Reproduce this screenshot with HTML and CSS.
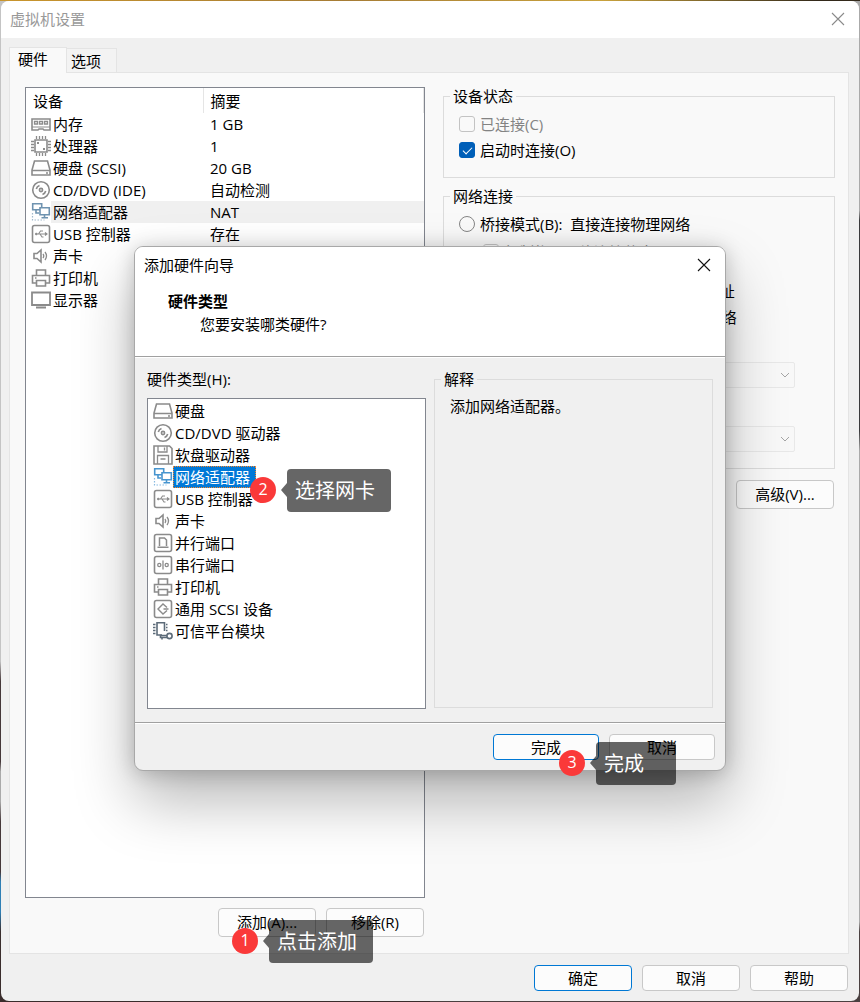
FILE: index.html
```html
<!DOCTYPE html>
<html lang="zh-CN">
<head>
<meta charset="utf-8">
<meta name="viewport" content="width=device-width, initial-scale=1">
<title>虚拟机设置</title>
<link rel="stylesheet" href="styles.css">
</head>
<body>
<svg class="sprite" aria-hidden="true">
  <symbol id="i-memory" viewBox="0 0 20 20"><path d="M1 5h18v11h-6l-1-1H8l-1 1H1z"/><path d="M1 13h18" stroke-width="1"/><path d="M3.500 7.500h3v2.500h-3zM8.500 7.500h3v2.500h-3zM13.500 7.500h3v2.500h-3z" stroke-width="1.300"/></symbol>
  <symbol id="i-cpu" viewBox="0 0 20 20"><path d="M4 4h12v12H4z"/><path d="M5.500 0v3M8.500 0v3M11.500 0v3M14.500 0v3M5.500 17v3M8.500 17v3M11.500 17v3M14.500 17v3M0 5.500h3M0 8.500h3M0 11.500h3M0 14.500h3M17 5.500h3M17 8.500h3M17 11.500h3M17 14.500h3" stroke-width="1.300"/><path d="M6 7h2M12 13h2" stroke-width="2"/></symbol>
  <symbol id="i-disk" viewBox="0 0 20 20"><path d="M3.500 3h13L19 12v5H1v-5z"/><path d="M1 12.500h18M15 15h2"/></symbol>
  <symbol id="i-cd" viewBox="0 0 20 20"><circle cx="10" cy="10" r="8.300"/><circle cx="10" cy="10" r="1.600"/><path d="M5.300 9A5 5 0 0 1 8.500 5.500M14.700 11A5 5 0 0 1 11.500 14.500"/></symbol>
  <symbol id="i-net" viewBox="0 0 20 20"><path d="M1.700 1.700h9v6h-9z" fill="#fff"/><path d="M5 8v3h3" /><path d="M9 5.700h9.300v7H9z" fill="#fff"/><path d="M13.500 13v2.500M10.500 15.700h6.500"/><path d="M1.500 11v7h12" stroke-width="1.200" stroke-dasharray="1.500 1.500" opacity=".65"/></symbol>
  <symbol id="i-usb" viewBox="0 0 20 20"><rect x="1.500" y="1.500" width="17" height="17" rx="2"/><path d="M5 10h10M7.500 10l2-3H12M9 10l2 3h1.500M14 8.500l2 1.500-2 1.500" stroke-width="1.100"/><circle cx="5.200" cy="10" r=".9" fill="currentColor" stroke-width=".8"/></symbol>
  <symbol id="i-sound" viewBox="0 0 20 20"><path d="M3 7.500h3L10 4v12l-4-3.500H3z"/><path d="M12 8q1.500 2 0 4M14 6q3 4 0 8" stroke-width="1.300"/></symbol>
  <symbol id="i-print" viewBox="0 0 20 20"><path d="M5.500 7.500V2h9v5.500M5.500 15h-4V7.500h17V15h-4M5.500 12.500h9V18h-9zM4 10h1.500"/></symbol>
  <symbol id="i-monitor" viewBox="0 0 20 20"><path d="M1 2.500h18v12.500H1zM5 17.500h10" stroke-width="1.800"/></symbol>
  <symbol id="i-floppy" viewBox="0 0 20 20"><path d="M1 1h15.500L19 3.500V19H1z"/><path d="M5 1v6h9V1M11.500 2.500v3M4.500 19v-8.500h11V19M7.500 14h5" stroke-width="1.300"/></symbol>
  <symbol id="i-parallel" viewBox="0 0 20 20"><rect x="1.500" y="1.500" width="17" height="17" rx="2"/><path d="M6.500 13V5h5l2 2v6M4.500 14.200h11" stroke-width="1.500"/></symbol>
  <symbol id="i-serial" viewBox="0 0 20 20"><rect x="1.500" y="1.500" width="17" height="17" rx="2"/><path d="M10 5.500v9" stroke-width="1.300"/><circle cx="6.300" cy="10" r="1.600" stroke-width="1.300"/><circle cx="13.700" cy="10" r="1.600" stroke-width="1.300"/></symbol>
  <symbol id="i-scsi" viewBox="0 0 20 20"><rect x="1.500" y="1.500" width="17" height="17" rx="2"/><path d="M14 8.500L10 5 5 10l5 5 4-3.500M10.500 10h5" stroke-width="1.400"/></symbol>
  <symbol id="i-tpm" viewBox="0 0 20 20"><path d="M9 14H4V1.700h7.500V10M0 3.500h2.500M0 6.500h2.500M0 9.500h2.500M0 12.500h2.500M13 3.500h1.500M13 6.500h1.500M13 9.500h1.500"/><circle cx="16.500" cy="15" r="2.600"/><path d="M14 14.500H7.500v2H14M9 17v1.500"/></symbol>
  <symbol id="i-close" viewBox="0 0 14 14"><path d="M1 1l12 12M13 1L1 13"/></symbol>
</svg>

<main class="desktop">
  <section class="window" aria-label="虚拟机设置">
    <header class="titlebar">
      <h1>虚拟机设置</h1>
      <button class="close" aria-label="关闭"><svg><use href="#i-close"/></svg></button>
    </header>

    <div class="tabs" role="tablist">
      <button class="tab active" role="tab" aria-selected="true">硬件</button>
      <button class="tab" role="tab" aria-selected="false">选项</button>
    </div>

    <div class="panel" role="tabpanel">
      <div class="devices">
        <div class="device-box">
          <table class="device-table">
            <colgroup><col class="c-icon"><col class="c-name"><col></colgroup>
            <thead><tr><th colspan="2">设备</th><th>摘要</th></tr></thead>
            <tbody>
              <tr><td><svg class="icon"><use href="#i-memory"/></svg></td><td>内存</td><td>1 GB</td></tr>
              <tr><td><svg class="icon"><use href="#i-cpu"/></svg></td><td>处理器</td><td>1</td></tr>
              <tr><td><svg class="icon"><use href="#i-disk"/></svg></td><td>硬盘 (SCSI)</td><td>20 GB</td></tr>
              <tr><td><svg class="icon"><use href="#i-cd"/></svg></td><td>CD/DVD (IDE)</td><td>自动检测</td></tr>
              <tr class="current"><td><svg class="icon blue"><use href="#i-net"/></svg></td><td>网络适配器</td><td>NAT</td></tr>
              <tr><td><svg class="icon"><use href="#i-usb"/></svg></td><td>USB 控制器</td><td>存在</td></tr>
              <tr><td><svg class="icon"><use href="#i-sound"/></svg></td><td>声卡</td><td></td></tr>
              <tr><td><svg class="icon"><use href="#i-print"/></svg></td><td>打印机</td><td></td></tr>
              <tr><td><svg class="icon"><use href="#i-monitor"/></svg></td><td>显示器</td><td></td></tr>
            </tbody>
          </table>
        </div>
        <div class="device-actions">
          <div class="anchor">
            <button class="btn">添加(A)...</button>
            <div class="note note-add"><b>1</b><span>点击添加</span></div>
          </div>
          <button class="btn">移除(R)</button>
        </div>
      </div>

      <div class="settings">
        <fieldset class="group state">
          <legend>设备状态</legend>
          <label class="choice muted"><input type="checkbox" disabled>已连接(C)</label>
          <label class="choice"><input type="checkbox" checked>启动时连接(O)</label>
        </fieldset>
        <fieldset class="group network">
          <legend>网络连接</legend>
          <label class="choice"><input type="radio" name="mode">桥接模式(B):&nbsp; 直接连接物理网络</label>
          <label class="choice sub muted"><input type="checkbox" disabled>复制物理网络连接状态(P)</label>
          <label class="choice nat"><input type="radio" name="mode" checked>NAT 模式(N):&nbsp; 用于共享主机的&nbsp; IP 地址</label>
          <label class="choice"><input type="radio" name="mode">仅主机模式(H):&nbsp; 与主机共享的专用网络</label>
          <label class="choice"><input type="radio" name="mode">自定义(U): 特定虚拟网络</label>
          <div class="combo"><select disabled aria-label="虚拟网络"><option></option></select><svg viewBox="0 0 10 6"><path d="M1 1l4 4 4-4"/></svg></div>
          <label class="choice lan"><input type="radio" name="mode">LAN 区段(L):</label>
          <div class="combo"><select disabled aria-label="LAN 区段"><option></option></select><svg viewBox="0 0 10 6"><path d="M1 1l4 4 4-4"/></svg></div>
        </fieldset>
        <div class="net-actions">
          <button class="btn wide">LAN 区段(S)...</button>
          <button class="btn">高级(V)...</button>
        </div>
      </div>
    </div>

    <footer class="footer">
      <button class="btn low primary">确定</button>
      <button class="btn low">取消</button>
      <button class="btn low">帮助</button>
    </footer>
  </section>

  <section class="dialog" role="dialog" aria-label="添加硬件向导">
    <header class="dialog-head">
      <div class="dialog-title">
        <span>添加硬件向导</span>
        <button class="close dark" aria-label="关闭"><svg><use href="#i-close"/></svg></button>
      </div>
      <h2>硬件类型</h2>
      <p>您要安装哪类硬件?</p>
    </header>
    <div class="dialog-body">
      <div class="types">
        <div class="types-label" id="types-label">硬件类型(H):</div>
        <ul class="listbox" role="listbox" aria-labelledby="types-label">
          <li role="option"><svg class="icon"><use href="#i-disk"/></svg><span>硬盘</span></li>
          <li role="option"><svg class="icon"><use href="#i-cd"/></svg><span>CD/DVD 驱动器</span></li>
          <li role="option"><svg class="icon"><use href="#i-floppy"/></svg><span>软盘驱动器</span></li>
          <li role="option" aria-selected="true"><svg class="icon bright"><use href="#i-net"/></svg><span>网络适配器</span>
            <div class="note note-select"><b>2</b><span>选择网卡</span></div></li>
          <li role="option"><svg class="icon"><use href="#i-usb"/></svg><span>USB 控制器</span></li>
          <li role="option"><svg class="icon"><use href="#i-sound"/></svg><span>声卡</span></li>
          <li role="option"><svg class="icon"><use href="#i-parallel"/></svg><span>并行端口</span></li>
          <li role="option"><svg class="icon"><use href="#i-serial"/></svg><span>串行端口</span></li>
          <li role="option"><svg class="icon"><use href="#i-print"/></svg><span>打印机</span></li>
          <li role="option"><svg class="icon"><use href="#i-scsi"/></svg><span>通用 SCSI 设备</span></li>
          <li role="option"><svg class="icon slate"><use href="#i-tpm"/></svg><span>可信平台模块</span></li>
        </ul>
      </div>
      <fieldset class="group explain">
        <legend>解释</legend>
        <p>添加网络适配器。</p>
      </fieldset>
    </div>
    <footer class="dialog-foot">
      <div class="anchor">
        <button class="btn low finish primary">完成</button>
        <div class="note note-finish"><b>3</b><span>完成</span></div>
      </div>
      <button class="btn low finish">取消</button>
    </footer>
  </section>
</main>
</body>
</html>
```
FILE: styles.css
```css
* { box-sizing: border-box; }

body {
  margin: 0;
  color: #000;
  font: 15px/20px "Open Sans", "Noto Sans CJK SC", sans-serif;
}

button, select, input { font: inherit; color: inherit; margin: 0; }
h1, h2, p, ul { margin: 0; padding: 0; font: inherit; }

.sprite { position: absolute; width: 0; height: 0; }

.desktop {
  position: relative;
  display: flex;
  min-height: 100vh;
  padding: 1px;
  background:
    linear-gradient(90deg, #c9952c, #a67c35 40%, #c9a23c 70%, #33291a 95%) top / 100% 1px no-repeat,
    linear-gradient(#c4c4c4 0 66%, #46383a 68% 76%, #aaa 77% 80%, #46383a 82% 87%, #2f7fb5 88% 91%, #3a2d2c 93%) left / 50% 100% no-repeat,
    linear-gradient(#aaa 0 21%, #3a3a3c 22% 43%, #aaa 45% 92%, #4a4040 93%) right / 50% 100% no-repeat;
}

.window {
  flex: 1;
  display: flex;
  flex-direction: column;
  min-width: 0;
  overflow: hidden;
  border-radius: 8px;
  background: #f0f0f0;
}

.titlebar {
  display: flex;
  align-items: center;
  justify-content: space-between;
  height: 37px;
  padding: 0 14px 2px 9px;
  background: #fff;
  color: #999;
}

.close {
  display: flex;
  padding: 0;
  border: 0;
  background: none;
  color: #8a8a8a;
}
.close svg { width: 14px; height: 14px; fill: none; stroke: currentColor; stroke-width: 1.1; }
.close.dark { color: #111; }

.tabs {
  display: flex;
  align-items: flex-end;
  padding: 9px 8px 0;
}
.tab {
  height: 24px;
  width: 50px;
  padding: 0 0 0 4px;
  border: 1px solid #e4e4e4;
  border-width: 1px 1px 0 0;
  background: #f3f3f3;
  text-align: left;
}
.tab.active {
  position: relative;
  width: 58px;
  height: 26px;
  margin-bottom: -1px;
  padding: 0 0 3px 8px;
  border-width: 1px 1px 0 1px;
  background: #f9f9f9;
}

.panel {
  flex: 1;
  display: grid;
  grid-template-columns: 400fr 392fr;
  column-gap: 18px;
  margin: 0 10px 0 8px;
  padding: 14px 13px 16px 15px;
  border: 1px solid #e4e4e4;
  background: #f9f9f9;
}

.devices { display: flex; flex-direction: column; gap: 10px; }
.device-box { flex: 1; border: 1px solid #82868f; background: #fff; }
.device-table { width: 100%; border-collapse: collapse; table-layout: fixed; }
.device-table .c-icon { width: 25px; }
.device-table .c-name { width: 152px; }
.device-table th { height: 25px; padding: 0 7px; text-align: left; font-weight: 400; border-right: 1px solid #e5e5e5; }
.device-table td { height: 22px; padding: 0 2px; white-space: nowrap; }
.device-table td:first-child { padding: 0 0 0 5px; }
.device-table td:last-child { padding-left: 7px; }
.current td + td { background: #f0f0f0; }

.icon {
  display: block;
  flex: none;
  width: 20px;
  height: 20px;
  fill: none;
  stroke: currentColor;
  stroke-width: 1.6;
  color: #8b8b8b;
}
.icon.blue { color: #6f93b0; }
.icon.bright { color: #4795cf; }
.icon.slate { color: #5c6b79; }

.device-actions { display: flex; justify-content: flex-end; gap: 10px; padding-right: 1px; }
.anchor { position: relative; }

.btn {
  display: block;
  width: 98px;
  height: 29px;
  padding: 0 0 1px;
  border: 1px solid #c8c8c8;
  border-radius: 4px;
  background: #fcfcfc;
  line-height: 20px;
  white-space: nowrap;
}
.btn.low { height: 26px; }
.btn.wide { width: 118px; }
.btn.finish { width: 106px; }
.btn.primary { border-color: #0078d4; }

.group {
  min-width: 0;
  margin: 0;
  padding: 0 15px;
  border: 1px solid #dcdcdc;
}
.group legend { margin-left: -9px; padding: 0 3px; }
.state { height: 92px; padding-top: 5px; }
.network { height: 283px; margin-top: 8px; padding-top: 5px; }
.settings { margin-top: -1px; }

.choice {
  display: flex;
  align-items: center;
  gap: 5px;
  height: 26px;
  white-space: nowrap;
}
.choice.muted { color: #838383; }
.choice.sub { padding-left: 24px; margin-top: 2px; }
.choice.nat { margin-top: 13px; }
.choice.lan { margin: 7px 0 5px; }
.choice input {
  flex: none;
  display: grid;
  place-items: center;
  appearance: none;
  width: 16px;
  height: 16px;
  border: 1px solid #858585;
  border-radius: 3px;
  background: #f9f9f9;
}
.choice input[type="radio"] { border-radius: 50%; }
.choice input:disabled { border-color: #c3c3c3; }
.choice input[type="checkbox"]:checked { border-color: #005fb8; background: #005fb8; }
.choice input[type="checkbox"]:checked::after {
  content: "";
  width: 8px;
  height: 4px;
  margin-bottom: 2px;
  border: solid #fff;
  border-width: 0 0 1px 1px;
  transform: rotate(-45deg);
}

.combo { position: relative; margin: 0 24px; }
.choice + .combo { margin-top: 6px; }
.choice.lan + .combo { margin-top: 0; }
.combo select {
  display: block;
  width: 100%;
  height: 26px;
  appearance: none;
  border: 1px solid #e2e2e2;
  border-radius: 2px;
  background: #f8f8f8;
}
.combo svg {
  position: absolute;
  right: 5px;
  top: 10px;
  width: 10px;
  height: 6px;
  fill: none;
  stroke: #a5a5a5;
}

.net-actions { display: flex; justify-content: flex-end; gap: 10px; margin-top: 11px; padding-right: 1px; }

.footer { display: flex; justify-content: flex-end; gap: 10px; padding: 11px 11px 10px; }

.dialog {
  position: absolute;
  top: 246px;
  left: calc(50% - 296px);
  width: 592px;
  border: 1px solid #a8a8a8;
  border-radius: 9px;
  background: #f0f0f0;
  box-shadow: 0 30px 60px rgba(0, 0, 0, .28), 0 2px 20px rgba(0, 0, 0, .2);
}
.dialog-head {
  padding: 0 14px 22px 9px;
  border-bottom: 1px solid #a0a0a0;
  border-radius: 8px 8px 0 0;
  background: #fff;
}
.dialog-title { display: flex; align-items: center; justify-content: space-between; height: 35px; margin-bottom: 9px; }
.dialog-head h2 { padding-left: 24px; font-weight: 700; }
.dialog-head p { padding: 3px 0 0 56px; }

.dialog-body {
  display: grid;
  grid-template-columns: 1fr 1fr;
  gap: 8px;
  padding: 11px 12px 13px 12px;
  border-top: 1px solid #fff;
}
.types { display: flex; flex-direction: column; }
.types-label { margin-bottom: 9px; }
.listbox {
  height: 311px;
  padding: 1px 0 0 5px;
  border: 1px solid #82868f;
  background: #fff;
  list-style: none;
}
.listbox li { position: relative; display: flex; align-items: center; height: 22px; white-space: nowrap; }
.listbox li > span { padding: 0 2px; border: 1px solid transparent; border-width: 1px 0; }
.listbox [aria-selected="true"] > span {
  padding: 0 5px 0 1px;
  border: 1px dotted #ff8728;
  background: #0078d7;
  color: #fff;
}
.explain { padding-top: 7px; margin-bottom: 1px; }
.explain p { white-space: nowrap; }

.dialog-foot {
  display: flex;
  justify-content: flex-end;
  gap: 10px;
  padding: 11px 10px 10px;
  border-top: 1px solid #a0a0a0;
  border-radius: 0 0 8px 8px;
  box-shadow: inset 0 1px #fff;
}

/* Numbered step markers with their callouts */
.note {
  position: absolute;
  z-index: 1;
  display: flex;
  align-items: flex-start;
  gap: 11px;
  color: #fff;
  white-space: nowrap;
}
.note b {
  width: 26px;
  height: 26px;
  border-radius: 50%;
  background: #fa3939;
  font-size: 16px;
  font-weight: 400;
  line-height: 25px;
  text-align: center;
}
.note span {
  position: relative;
  min-width: 80px;
  height: 43px;
  padding: 0 16px 0 8px;
  margin-top: -8px;
  border-radius: 4px;
  background: rgba(0, 0, 0, .6);
  font-size: 20px;
  line-height: 44px;
}
.note span::before {
  content: "";
  position: absolute;
  top: 14px;
  right: 100%;
  border: solid transparent;
  border-width: 7px 6px 7px 0;
  border-right-color: rgba(0, 0, 0, .6);
}
.note-add { left: 14px; top: 20px; }
.note-select { left: 97px; top: 11px; }
.note-finish { left: 66px; top: 16px; }
```
